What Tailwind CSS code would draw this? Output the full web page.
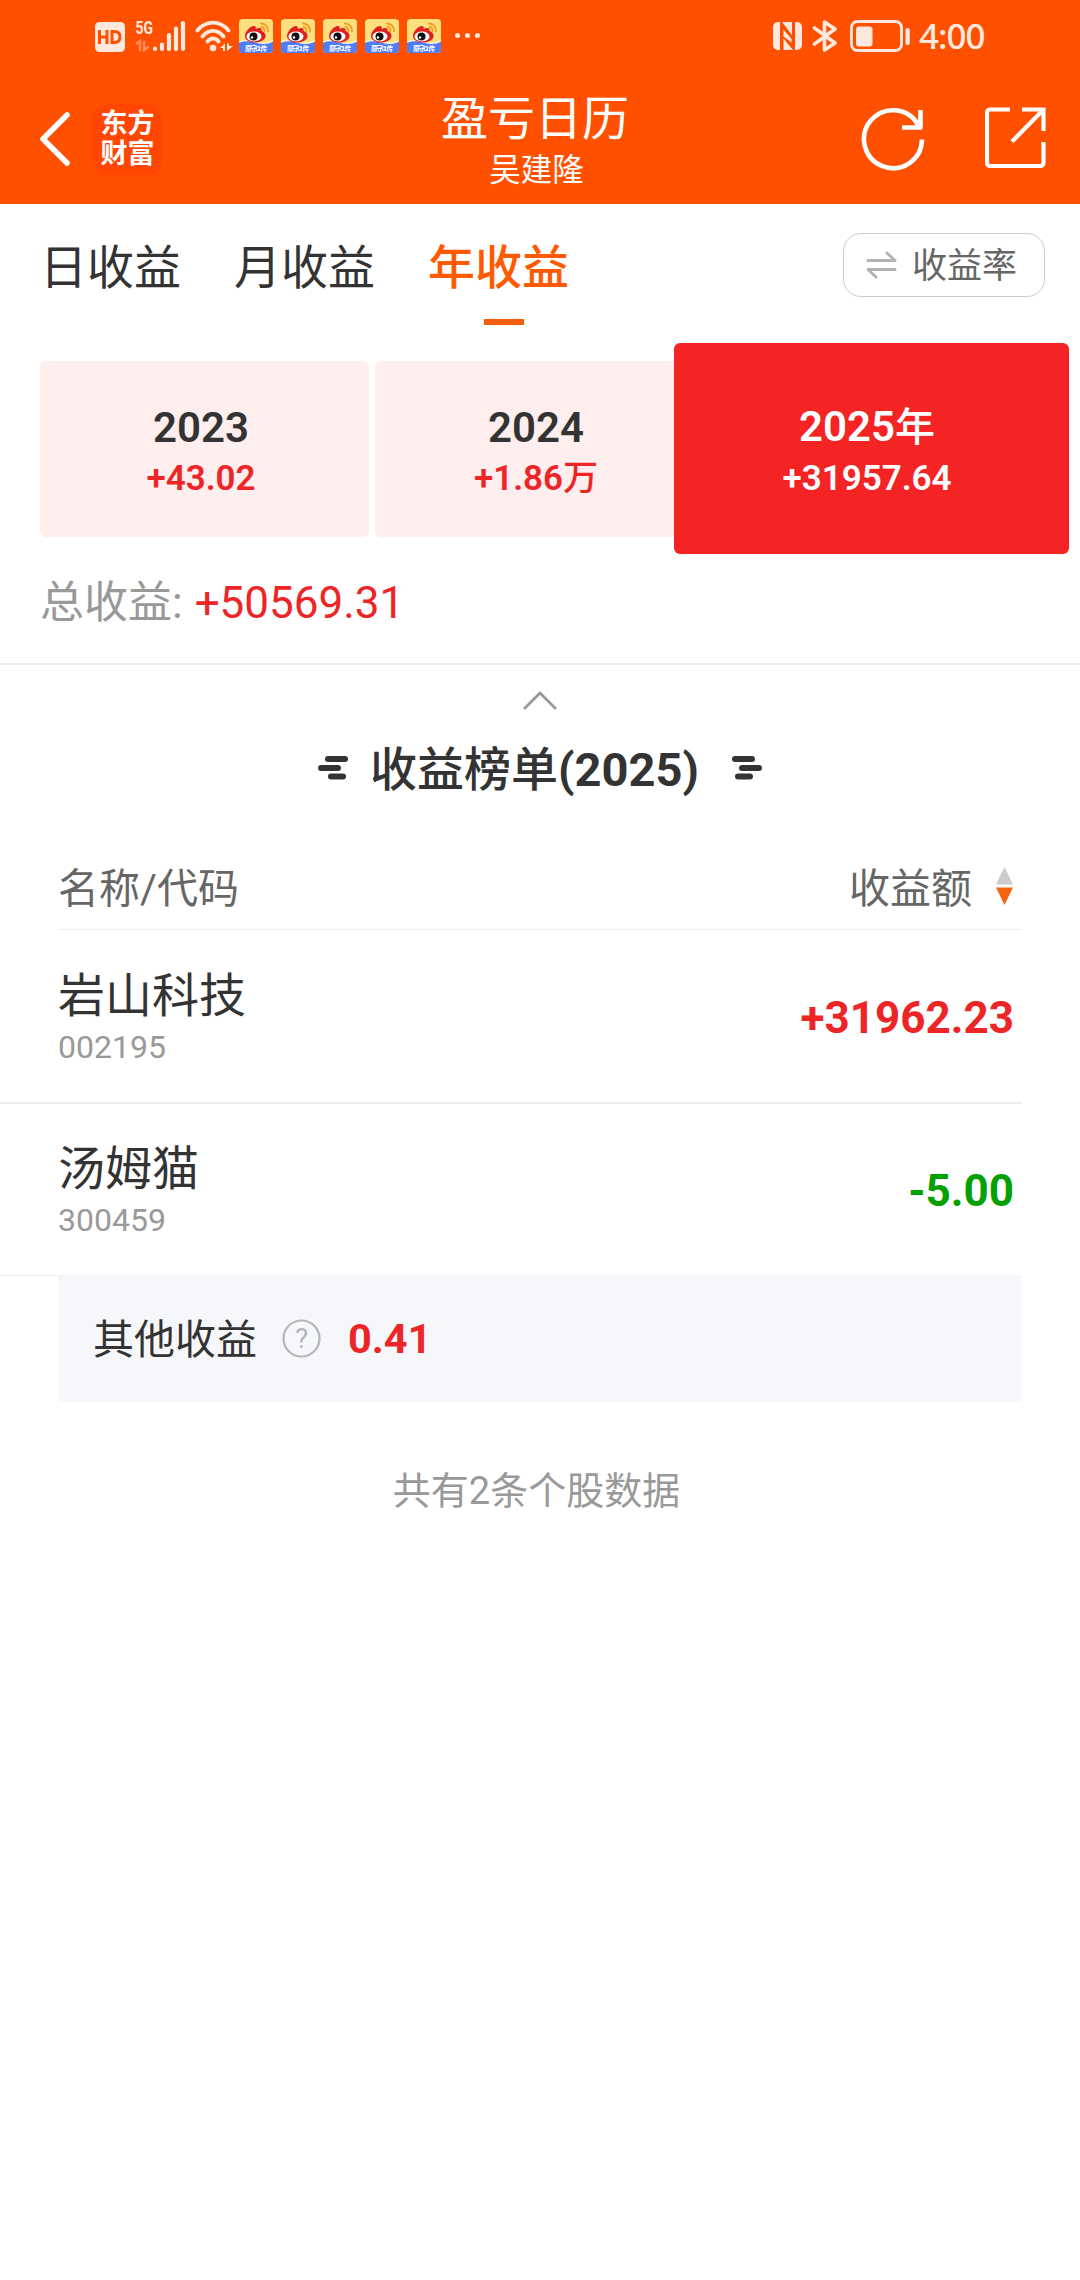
<!DOCTYPE html>
<html lang="zh-CN">
<head>
  <meta charset="UTF-8">
  <meta name="viewport" content="width=device-width, initial-scale=1.0">
  <title>盈亏日历</title>
  <script src="https://cdn.jsdelivr.net/npm/@tailwindcss/browser@4"></script>
</head>
<body class="w-[1080px] min-h-[2280px] bg-white text-[#333333] font-[Roboto,'Noto_Sans_CJK_SC',sans-serif] overflow-x-hidden">

  <!-- Shared app icon for the notifications -->
  <svg class="hidden">
    <symbol id="weibo" viewBox="0 0 34 34">
      <rect width="34" height="34" rx="4" fill="#ffdf7e"/>
      <path d="M0 23q8-3 17 0t17-1v8a4 4 0 0 1-4 4H4a4 4 0 0 1-4-4z" fill="#4f7cf7"/>
      <path d="M0 23q8-3 17 0t17-1" fill="none" stroke="#fff3d0" stroke-width="1.5"/>
      <path d="M6 17c0-4 5-10 9-10 2 0 2 2 1.500 3 3-1.500 7-1.500 6 2 3 1 4 2.500 4 5 0 4-5 6.500-10.500 6.500S6 21 6 17z" fill="#e0201c"/>
      <ellipse cx="15" cy="17.500" rx="7.500" ry="5" fill="#fff"/>
      <circle cx="14.500" cy="17.500" r="4" fill="#111"/>
      <circle cx="13" cy="18.500" r="1.200" fill="#fff"/>
      <path d="M22 4.500a7 7 0 0 1 7 8M22.500 8a3.500 3.500 0 0 1 3 4" fill="none" stroke="#f39a1d" stroke-width="1.800" stroke-linecap="round"/>
      <text x="17" y="32" text-anchor="middle" font-size="6.500" font-weight="700" fill="#fff" textLength="22">原守CL传</text>
    </symbol>
  </svg>

  <header class="h-[204px] bg-[#ff5000] text-white">
    <!-- Status bar -->
    <div class="h-[72px] pl-[95px] pr-[95px] flex justify-between text-[#ffe9df]">
      <div class="flex items-start pt-[19px]">
        <svg class="w-[30px] h-[30px] mt-[3px]" viewBox="0 0 30 30">
          <rect width="30" height="30" rx="4.500" fill="currentColor"/>
          <path d="M4.500 8v14M12 8v14M4.500 15H12M17 9.500v11h2.500c4 0 5.500-2 5.500-5.500s-1.500-5.500-5.500-5.500z" fill="none" stroke="#ff5000" stroke-width="3"/>
        </svg>
        <svg class="w-[52px] h-[34px] ml-[10px]" viewBox="0 0 52 34">
          <text x="0.500" y="15" font-family="Roboto" font-size="17.500" font-weight="700" fill="currentColor" textLength="17.500" lengthAdjust="spacingAndGlyphs">5G</text>
          <path d="M1 25l4-3v10M9 22v9l5-3.500" fill="none" stroke="#ff8a58" stroke-width="2.500"/>
          <g stroke="currentColor" stroke-width="4.200" stroke-linecap="round">
            <path d="M20 29.500v.5M27 25.500V30M34 16v14M41 9.500V30M48 4v26"/>
          </g>
        </svg>
        <svg class="w-[38px] h-[34px] ml-[8px]" viewBox="0 0 38 34">
          <g fill="none" stroke="currentColor" stroke-width="3.800" stroke-linecap="round">
            <path d="M2.500 11.500C11 1 25 1 33.500 11.500M7.500 17.500c6-7.500 15-7.500 21 0M12.500 22.500c3-4 8-4 11 0"/>
          </g>
          <circle cx="18" cy="29" r="3.300" fill="currentColor"/>
          <path d="M25 29l5-4.500V32h-2v-3zM32 24.500V32l6-5h-4v-2.500z" fill="currentColor"/>
        </svg>
        <div class="flex gap-2 ml-[6px]">
          <svg class="w-[34px] h-[34px]"><use href="#weibo"/></svg>
          <svg class="w-[34px] h-[34px]"><use href="#weibo"/></svg>
          <svg class="w-[34px] h-[34px]"><use href="#weibo"/></svg>
          <svg class="w-[34px] h-[34px]"><use href="#weibo"/></svg>
          <svg class="w-[34px] h-[34px]"><use href="#weibo"/></svg>
        </div>
        <div class="flex gap-[5px] ml-[14px] mt-[14px]">
          <i class="size-[5px] rounded-full bg-current"></i>
          <i class="size-[5px] rounded-full bg-current"></i>
          <i class="size-[5px] rounded-full bg-current"></i>
        </div>
      </div>
      <div class="flex items-start pt-[20px]">
        <svg class="w-[29px] h-[28px] mt-[2px]" viewBox="0 0 29 28">
          <path d="M5 0h2v28H5a5 5 0 0 1-5-5V5a5 5 0 0 1 5-5zM24 28h-2V0h2a5 5 0 0 1 5 5v18a5 5 0 0 1-5 5z" fill="currentColor"/>
          <path d="M9 0h10v13z" fill="currentColor"/>
          <path d="M10.500 7.500l8 9.500v3.500l-8-6z" fill="currentColor"/>
          <path d="M10.500 16.500V28H20z" fill="currentColor"/>
        </svg>
        <svg class="w-[26px] h-[32px] ml-[10px]" viewBox="0 0 26 32">
          <path d="M2.500 8L23 23l-10.500 7V2L23 9 2.500 24" fill="none" stroke="currentColor" stroke-width="3.600" stroke-linejoin="round" stroke-linecap="round"/>
        </svg>
        <svg class="w-[60px] h-[32px] ml-[12px]" viewBox="0 0 60 32">
          <rect x="1.500" y="1.500" width="50" height="29" rx="6" fill="none" stroke="currentColor" stroke-width="2.800"/>
          <rect x="6" y="6.500" width="16.500" height="20" rx="3" fill="currentColor"/>
          <rect x="55.500" y="8" width="4.300" height="17" rx="2" fill="currentColor"/>
        </svg>
        <span class="ml-[9px] -mt-[8px] w-[66px] whitespace-nowrap text-[35px] leading-[48px] tracking-[-1px] font-medium font-['Noto_Sans']">4:00</span>
      </div>
    </div>

    <!-- Title bar -->
    <div class="h-[132px] pl-[38px] pr-[34px] grid grid-cols-[1fr_auto_1fr] items-center">
      <div class="flex items-center gap-[22px] pt-[2px]">
        <svg class="w-[32px] h-[54px]" viewBox="0 0 32 54">
          <path d="M29 3L5 27l24 24" fill="none" stroke="currentColor" stroke-width="5.500" stroke-linecap="round" stroke-linejoin="round"/>
        </svg>
        <div class="size-[71px] rounded-[16px] bg-[#ff4603] flex flex-col items-center justify-center text-[27px] leading-[30px] font-bold">
          <span>东方</span>
          <span>财富</span>
        </div>
      </div>
      <div class="text-center -ml-[14px]">
        <h1 class="text-[47px] leading-[62px] mt-[4px]">盈亏日历</h1>
        <p class="text-[31.500px] leading-[42px] pl-[3px]">吴建隆</p>
      </div>
      <div class="flex justify-end gap-[60px] pt-px">
        <svg class="w-[64px] h-[64px]" viewBox="0 0 64 64">
          <path d="M61 32.500A29 29 0 1 1 57 17.500M59.500 3v18.500M41 20.500h20" fill="none" stroke="currentColor" stroke-width="4.600"/>
        </svg>
        <svg class="w-[61px] h-[61px]" viewBox="0 0 61 61">
          <path d="M25 2.500H5a3 3 0 0 0-3 3V56a3 3 0 0 0 3 3h50.500a3 3 0 0 0 3-3V35M37 2.500h21.500V24M58 3L27 34.500" fill="none" stroke="currentColor" stroke-width="4.200"/>
        </svg>
      </div>
    </div>
  </header>

  <!-- Period tabs -->
  <nav class="h-[157px] pl-[40px] pr-[35px] flex justify-between items-start">
    <div class="flex gap-[53px] pt-[31px] text-[47px] leading-[66px]">
      <span>日收益</span>
      <span>月收益</span>
      <div class="flex flex-col items-center text-[#ff5a00] font-medium">
        <span>年收益</span>
        <i class="block w-[40px] h-[6px] mt-[18px] ml-[10px] bg-[#f55c0a]"></i>
      </div>
    </div>
    <button class="mt-[29px] w-[202px] h-[64px] pl-[22px] flex items-center border border-[#cccccc] rounded-[18px] text-[35px] text-[#666666]">
      <svg class="w-[31px] h-[28px] mr-[15px]" viewBox="0 0 31 28">
        <path d="M2 9.500h27l-8-7.500M29 18.500H2l8 7.500" fill="none" stroke="#b2b2b2" stroke-width="3" stroke-linecap="round" stroke-linejoin="round"/>
      </svg>
      <span class="pt-[5px]">收益率</span>
    </button>
  </nav>

  <!-- Years -->
  <section class="relative h-[176px] pl-[40px] flex gap-[6px] text-center">
    <div class="w-[329px] rounded-[6px] bg-[#feeeee] pt-[41px] pr-[7px]">
      <p class="text-[42px] leading-[51px] font-semibold">2023</p>
      <p class="text-[35px] leading-[51px] font-semibold text-[#ee2526]">+43.02</p>
    </div>
    <div class="w-[329px] rounded-[6px] bg-[#feeeee] pt-[41px] pr-[7px]">
      <p class="text-[42px] leading-[51px] font-semibold">2024</p>
      <p class="text-[35px] leading-[51px] font-semibold text-[#ee2526]">+1.86<span class="font-medium">万</span></p>
    </div>
    <div class="absolute left-[674px] -top-[18px] w-[395px] h-[211px] rounded-[6px] bg-[#f42424] pt-[59px] pr-[9px] text-white">
      <p class="text-[42px] leading-[50px] font-semibold">2025<span class="text-[40px] font-medium">年</span></p>
      <p class="text-[35px] leading-[51px] font-semibold">+31957.64</p>
    </div>
  </section>

  <section class="h-[128px] pl-[40px] pt-[35px] border-b-2 border-[#ededed] flex text-[44px] leading-[62px]">
    <span class="text-[#999999]">总收益:</span>
    <span class="ml-[12px] text-[#ee2526]">+50569.31</span>
  </section>

  <svg class="block mx-auto mt-[25px] w-[36px] h-[21px]" viewBox="0 0 36 21">
    <path d="M2 19L18 3l16 16" fill="none" stroke="#999999" stroke-width="2.800"/>
  </svg>

  <!-- Ranking -->
  <div class="mt-[22px] h-[74px] flex justify-center items-center">
    <svg class="w-[30px] h-[24px] mb-[4px]" viewBox="0 0 30 24" fill="none" stroke="#333333" stroke-width="6" stroke-linecap="round">
      <path d="M10 3h17M3 12h17M13 20.500h12"/>
    </svg>
    <h2 class="ml-[22px] mr-[33px] text-[47px] leading-[60px] font-bold"><span class="font-medium">收益榜单</span>(2025)</h2>
    <svg class="w-[30px] h-[24px] mb-[4px]" viewBox="0 0 30 24" fill="none" stroke="#333333" stroke-width="6" stroke-linecap="round">
      <path d="M3 3h17M10 12h17M6 20.500h12"/>
    </svg>
  </div>

  <div class="mx-[58px] mt-[49px] h-[74px] flex justify-between items-start border-b border-[#ededed] text-[41px] leading-[66px] text-[#666666]">
    <span>名称/代码</span>
    <div class="flex items-start">
      <span>收益额</span>
      <svg class="w-[17px] h-[38px] ml-[24px] mr-[9px] mt-[11px]" viewBox="0 0 17 38">
        <path d="M8.500 0L17 17.500H0z" fill="#cccccc"/>
        <path d="M8.500 38L17 20.500H0z" fill="#f5640f"/>
      </svg>
    </div>
  </div>

  <ul class="mr-[58px]">
    <li class="h-[174px] pl-[58px] pr-[8px] flex justify-between items-center border-b-2 border-[#ededed]">
      <div class="pt-px">
        <p class="text-[47px] leading-[60px]">岩山科技</p>
        <p class="text-[32px] leading-[42px] text-[#999999]">002195</p>
      </div>
      <strong class="text-[44px] leading-[60px] mt-[4px] font-bold text-[#ee2526]">+31962.23</strong>
    </li>
    <li class="h-[172px] pl-[58px] pr-[8px] flex justify-between items-center border-b border-[#ededed]">
      <div>
        <p class="text-[47px] leading-[60px]">汤姆猫</p>
        <p class="text-[32px] leading-[42px] text-[#999999]">300459</p>
      </div>
      <strong class="text-[44px] leading-[60px] mt-[3px] font-bold text-[#04a004]">-5.00</strong>
    </li>
  </ul>

  <div class="relative mx-[58px] -mt-px h-[127px] pl-[35px] flex items-center bg-[#f6f7fa] text-[41px]">
    <span class="pt-[4px]">其他收益</span>
    <svg class="w-[39px] h-[39px] ml-[25px] mr-[27px]" viewBox="0 0 39 39">
      <circle cx="19.500" cy="19.500" r="18" fill="none" stroke="#b4b6bc" stroke-width="2.200"/>
      <text x="19.500" y="29" text-anchor="middle" font-family="Roboto" font-size="28" fill="#b4b6bc">?</text>
    </svg>
    <strong class="pt-[2px] text-[41.500px] font-bold text-[#ee2526]">0.41</strong>
  </div>

  <p class="mt-[59px] pr-[7px] text-center text-[38px] leading-[60px] text-[#999999]">共有2条个股数据</p>
</body>
</html>
